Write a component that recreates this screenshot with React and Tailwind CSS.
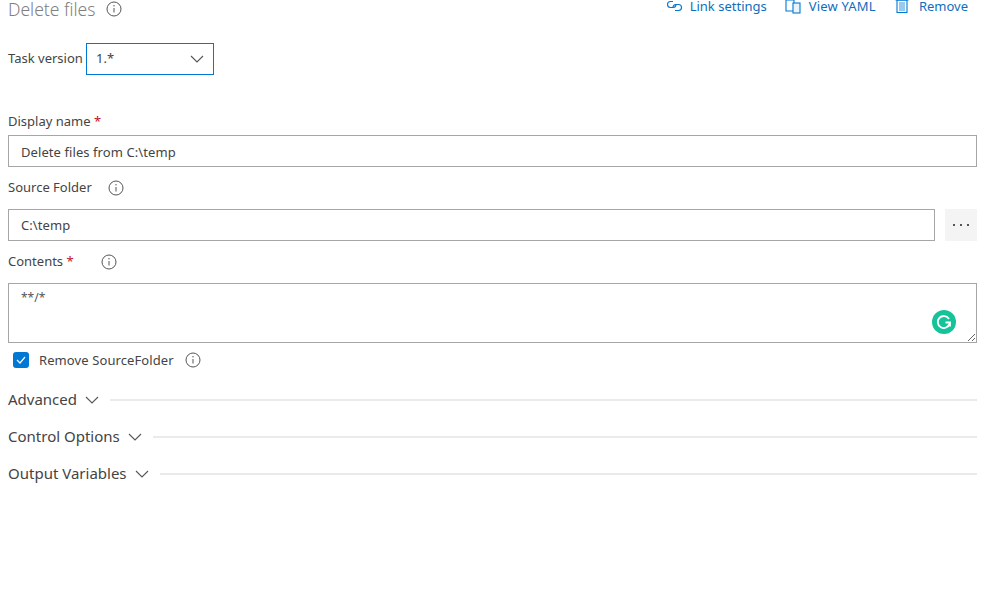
import React from "react";

const InfoIcon = ({ size = 16, className = "" }) => (
  <svg width={size} height={size} viewBox="0 0 16 16" fill="none" stroke="#555" strokeWidth="1" className={className}>
    <circle cx="8" cy="8" r="7" />
    <path d="M8 7v4.5" />
    <circle cx="8" cy="4.8" r="0.7" fill="#555" stroke="none" />
  </svg>
);

const Chevron = ({ className = "" }) => (
  <svg width="14" height="8" viewBox="0 0 14 8" fill="none" stroke="#555" strokeWidth="1.1" className={className}>
    <path d="M1 1l6 6 6-6" />
  </svg>
);

const LinkIcon = () => (
  <svg width="18" height="12" viewBox="0 0 18 12" fill="none" stroke="#0078d4" strokeWidth="1.1">
    <path d="M7 1.5H4.5a3 3 0 0 0 0 6H7a3 3 0 0 0 3-3" />
    <path d="M9 10.5h3.5a3 3 0 0 0 0-6H10a3 3 0 0 0-3 3" />
  </svg>
);

const YamlIcon = () => (
  <svg width="16" height="16" viewBox="0 0 16 16" fill="none" stroke="#0078d4" strokeWidth="1.1">
    <path d="M8 13H1V2h8v3" />
    <path d="M3.5 2V0.5h3V2" />
    <rect x="8" y="5" width="7" height="10" fill="#c7e0f4" fillOpacity="0.35" />
  </svg>
);

const TrashIcon = () => (
  <svg width="14" height="16" viewBox="0 0 14 16" fill="none" stroke="#0078d4" strokeWidth="1.1">
    <path d="M0.5 2h13" />
    <rect x="2" y="2" width="10" height="12.5" />
    <rect x="4" y="4" width="6" height="9" fill="#0078d4" fillOpacity="0.4" stroke="none" />
    <path d="M5 1h4" />
  </svg>
);

const GrammarlyBadge = () => (
  <div className="absolute right-[21px] bottom-[9px] w-6 h-6 rounded-full bg-[#15c39a] flex items-center justify-center">
    <svg width="16" height="16" viewBox="0 0 16 16" fill="none" stroke="#fff" strokeWidth="1.8">
      <path d="M13 5a6 6 0 1 0 0.6 4.5" />
      <path d="M9.5 8.5h4.5v4" />
    </svg>
  </div>
);

const Section = ({ title }) => (
  <div className="flex items-center h-5 text-[15px] text-[#444]">
    <span>{title}</span>
    <Chevron className="ml-2 mr-[11px] mt-px" />
    <div className="flex-1 h-0.5 mt-0.5 bg-[#eaeaea]" />
  </div>
);

const App = () => {
  return (
    <div className="w-[992px] h-[605px] overflow-hidden bg-white pl-2 pr-[15px] text-[13px] text-[#444] font-['Noto_Sans',sans-serif]">
      <div className="flex items-start justify-between h-[43px]">
        <div className="flex items-center h-[18px]">
          <span className="text-[17.5px] font-light text-[#808080] leading-[18px]">Delete files</span>
          <InfoIcon className="ml-[11px]" />
        </div>
        <div className="flex items-center h-3 leading-[12px] text-[#106ebe] mr-[9px]">
          <LinkIcon />
          <span className="ml-[6px] mr-[18px]">Link settings</span>
          <YamlIcon />
          <span className="ml-2 mr-[19px] tracking-[0.2px]">View YAML</span>
          <TrashIcon />
          <span className="ml-[10px]">Remove</span>
        </div>
      </div>

      <div className="flex items-center h-8">
        <span className="w-[78px] -mt-px">Task version</span>
        <div className="w-[128px] h-8 border border-[#0078d4] flex items-center justify-between pl-[9px] pr-[9px]">
          <span>1.*</span>
          <Chevron />
        </div>
      </div>

      <div className="mt-[38px] h-[17px] leading-[17px]">
        Display name <span className="text-[#c50f1f]">*</span>
      </div>
      <input
        readOnly
        value="Delete files from C:\temp"
        className="block mt-[5px] w-full h-8 border border-[#a6a6a6] px-3 pt-px tracking-[0.08px] outline-none"
      />

      <div className="flex items-center mt-[13px] h-[16px]">
        <span>Source Folder</span>
        <InfoIcon className="ml-4" />
      </div>
      <div className="flex mt-[13px] gap-[10px]">
        <input
          readOnly
          value="C:\temp"
          className="block flex-1 h-8 border border-[#a6a6a6] px-3 tracking-[0.08px] outline-none"
        />
        <div className="w-8 h-8 bg-[#f4f4f4] flex items-center justify-center gap-[5px]">
          <span className="w-0.5 h-0.5 bg-[#555]" />
          <span className="w-0.5 h-0.5 bg-[#555]" />
          <span className="w-0.5 h-0.5 bg-[#555]" />
        </div>
      </div>

      <div className="flex items-center mt-[13px] h-[16px]">
        <span>
          Contents <span className="text-[#c50f1f]">*</span>
        </span>
        <InfoIcon className="ml-[27px]" />
      </div>
      <div className="relative mt-[13px] h-[60px]">
        <textarea
          readOnly
          value="**/*"
          className="block w-full h-[60px] border border-[#a6a6a6] px-3 py-[5px] text-[12px] text-[#555] outline-none"
        />
        <GrammarlyBadge />
      </div>

      <div className="flex items-center mt-[9px] h-4 ml-[5px]">
        <div className="w-4 h-4 rounded-[3px] bg-[#0078d4] flex items-center justify-center">
          <svg width="10" height="8" viewBox="0 0 10 8" fill="none" stroke="#fff" strokeWidth="1.2">
            <path d="M1 4l3 3 5-6" />
          </svg>
        </div>
        <span className="ml-[10px] mt-0.5 tracking-[0.1px]">Remove SourceFolder</span>
        <InfoIcon className="ml-[11px]" />
      </div>

      <div className="mt-[21px] flex flex-col gap-[17px]">
        <Section title="Advanced" />
        <Section title="Control Options" />
        <Section title="Output Variables" />
      </div>
    </div>
  );
};

export default App;
